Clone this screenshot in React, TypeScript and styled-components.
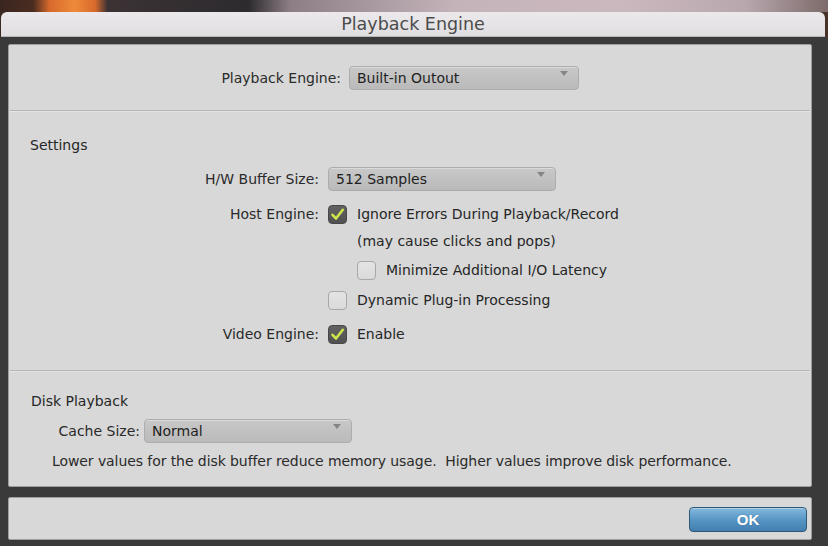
import React from "react";
import styled, { createGlobalStyle } from "styled-components";

const Global = createGlobalStyle`
  html, body { margin: 0; padding: 0; }
  body {
    background: #363636;
    font-family: "DejaVu Sans", "Liberation Sans", sans-serif;
    color: #262626;
  }
`;

const Screen = styled.div`
  width: 828px;
  height: 546px;
  display: flex;
  flex-direction: column;
  overflow: hidden;
  background: linear-gradient(90deg, #3a2a22 0%, #2f2f30 3%, #333 96%, #4a3326 100%);
`;

const Desktop = styled.div`
  height: 12px;
  flex: none;
  background: linear-gradient(90deg, #3a2620 0%, #4a2c20 4%, #d86a2c 6%, #ee8a3a 9%, #d86a2c 11.5%, #3b3234 13%, #2d2b2e 30%, #8d7e86 35%, #c4b4ba 55%, #cbb8be 75%, #b8a8ae 90%, #7d6a6a 100%);
`;

const TitleBar = styled.div`
  height: 24px;
  margin: 0 3px 0 1px;
  flex: none;
  border-radius: 6px 6px 0 0;
  background: linear-gradient(#ebe9eb, #e0dee0);
  border-bottom: 1px solid #b9b9b9;
  display: flex;
  align-items: center;
  justify-content: center;
  font-size: 17.5px;
  color: #4c4c4c;
`;

const Body = styled.div`
  flex: 1;
  display: flex;
  flex-direction: column;
  gap: 10px;
  padding: 7px 16px 6px 8px;
  background: #3a3a3a;
`;

const Panel = styled.div`
  background: #d8d8d8;
  border: 1px solid #9e9e9e;
  border-radius: 2px;
  display: flex;
  flex-direction: column;
`;

const MainPanel = styled(Panel)`
  height: 443px;
  box-sizing: border-box;
`;

const Section = styled.div<{ $pt: number; $h?: number }>`
  padding-top: ${(p) => p.$pt}px;
  ${(p) => (p.$h ? `height: ${p.$h}px;` : "flex: 1;")}
  box-sizing: border-box;
  display: flex;
  flex-direction: column;
`;

const Divider = styled.div`
  height: 1px;
  background: #b4b4b4;
  border-bottom: 1px solid #e4e4e4;
  margin: 0 1px;
`;

const Heading = styled.div<{ $pl: number }>`
  font-size: 14px;
  line-height: 20px;
  padding-left: ${(p) => p.$pl}px;
`;

const FormRow = styled.div<{ $label: number; $gap: number; $mt?: number }>`
  display: grid;
  grid-template-columns: ${(p) => p.$label}px auto;
  column-gap: ${(p) => p.$gap}px;
  align-items: center;
  height: 24px;
  margin-top: ${(p) => p.$mt ?? 0}px;
  font-size: 14px;
`;

const Label = styled.div`
  text-align: right;
  white-space: nowrap;
  color: #2a2a2a;
`;

const Control = styled.div<{ $indent?: number }>`
  display: flex;
  align-items: center;
  gap: 10px;
  padding-left: ${(p) => p.$indent ?? 0}px;
  white-space: nowrap;
`;

const SelectBox = styled.div<{ $w: number }>`
  width: ${(p) => p.$w}px;
  height: 24px;
  box-sizing: border-box;
  border-radius: 4px;
  border: 1px solid #acacac;
  background: linear-gradient(#c8c8c8, #bababa);
  box-shadow: inset 0 1px 0 rgba(255, 255, 255, 0.35);
  display: flex;
  align-items: center;
  justify-content: space-between;
  padding: 0 10px 0 7px;
  font-size: 14px;
  color: #1e1e1e;
`;

const Arrow = styled.span`
  width: 0;
  height: 0;
  border-left: 4px solid transparent;
  border-right: 4px solid transparent;
  border-top: 5px solid #858585;
  margin-top: -9px;
`;

const Box = styled.span<{ $checked?: boolean }>`
  width: 19px;
  height: 19px;
  flex: none;
  box-sizing: border-box;
  border-radius: 4px;
  display: inline-flex;
  align-items: center;
  justify-content: center;
  background: ${(p) => (p.$checked ? "linear-gradient(#626262, #505050)" : "linear-gradient(#e4e4e4, #dadada)")};
  border: 1px solid ${(p) => (p.$checked ? "#474747" : "#a8a8a8")};
`;

const Note = styled.div<{ $pl: number; $mt: number }>`
  font-size: 14px;
  letter-spacing: -0.08px;
  line-height: 20px;
  padding-left: ${(p) => p.$pl}px;
  margin-top: ${(p) => p.$mt}px;
  color: #2a2a2a;
  white-space: nowrap;
`;

const Footer = styled(Panel)`
  height: 43px;
  box-sizing: border-box;
  flex-direction: row;
  justify-content: flex-end;
  align-items: flex-start;
  padding: 9px 4px 0 0;
`;

const OkButton = styled.button`
  width: 118px;
  height: 25px;
  border-radius: 4px;
  border: 1px solid #2e5878;
  background: linear-gradient(#82b8dc, #5593c3 55%, #427fb0);
  color: #fff;
  font-family: "Liberation Sans", Arial, sans-serif;
  font-weight: bold;
  font-size: 15px;
  text-shadow: 0 0 1px rgba(0, 0, 0, 0.25);
  box-shadow: inset 0 1px 0 rgba(255, 255, 255, 0.35);
  padding: 0;
`;

const Check = ({ checked }: { checked?: boolean }) => (
  <Box $checked={checked}>
    {checked && (
      <svg width="15" height="15" viewBox="0 0 15 15">
        <path d="M2.5 7.8 L6 11.5 L12.8 2.8" fill="none" stroke="#cfe44a" strokeWidth="2.6" strokeLinecap="round" strokeLinejoin="round" />
      </svg>
    )}
  </Box>
);

export default function App() {
  return (
    <>
      <Global />
      <Screen>
        <Desktop />
        <TitleBar>Playback Engine</TitleBar>
        <Body>
          <MainPanel>
            <Section $pt={21} $h={65}>
              <FormRow $label={332} $gap={8}>
                <Label>Playback Engine:</Label>
                <SelectBox $w={230}>
                  Built-in Outout
                  <Arrow />
                </SelectBox>
              </FormRow>
            </Section>
            <Divider />
            <Section $pt={23} $h={258}>
              <Heading $pl={21}>Settings</Heading>
              <FormRow $label={310} $gap={9} $mt={12}>
                <Label>H/W Buffer Size:</Label>
                <SelectBox $w={228}>
                  512 Samples
                  <Arrow />
                </SelectBox>
              </FormRow>
              <FormRow $label={310} $gap={9} $mt={11}>
                <Label>Host Engine:</Label>
                <Control>
                  <Check checked />
                  Ignore Errors During Playback/Record
                </Control>
              </FormRow>
              <FormRow $label={310} $gap={9} $mt={3}>
                <Label />
                <Control $indent={29}>(may cause clicks and pops)</Control>
              </FormRow>
              <FormRow $label={310} $gap={9} $mt={5}>
                <Label />
                <Control $indent={29}>
                  <Check />
                  Minimize Additional I/O Latency
                </Control>
              </FormRow>
              <FormRow $label={310} $gap={9} $mt={6}>
                <Label />
                <Control>
                  <Check />
                  Dynamic Plug-in Processing
                </Control>
              </FormRow>
              <FormRow $label={310} $gap={9} $mt={10}>
                <Label>Video Engine:</Label>
                <Control>
                  <Check checked />
                  Enable
                </Control>
              </FormRow>
            </Section>
            <Divider />
            <Section $pt={19}>
              <Heading $pl={22}>Disk Playback</Heading>
              <FormRow $label={131} $gap={4} $mt={8}>
                <Label>Cache Size:</Label>
                <SelectBox $w={208}>
                  Normal
                  <Arrow />
                </SelectBox>
              </FormRow>
              <Note $pl={43} $mt={8}>
                Lower values for the disk buffer reduce memory usage.&nbsp; Higher values improve disk performance.
              </Note>
            </Section>
          </MainPanel>
          <Footer>
            <OkButton>OK</OkButton>
          </Footer>
        </Body>
      </Screen>
    </>
  );
}
